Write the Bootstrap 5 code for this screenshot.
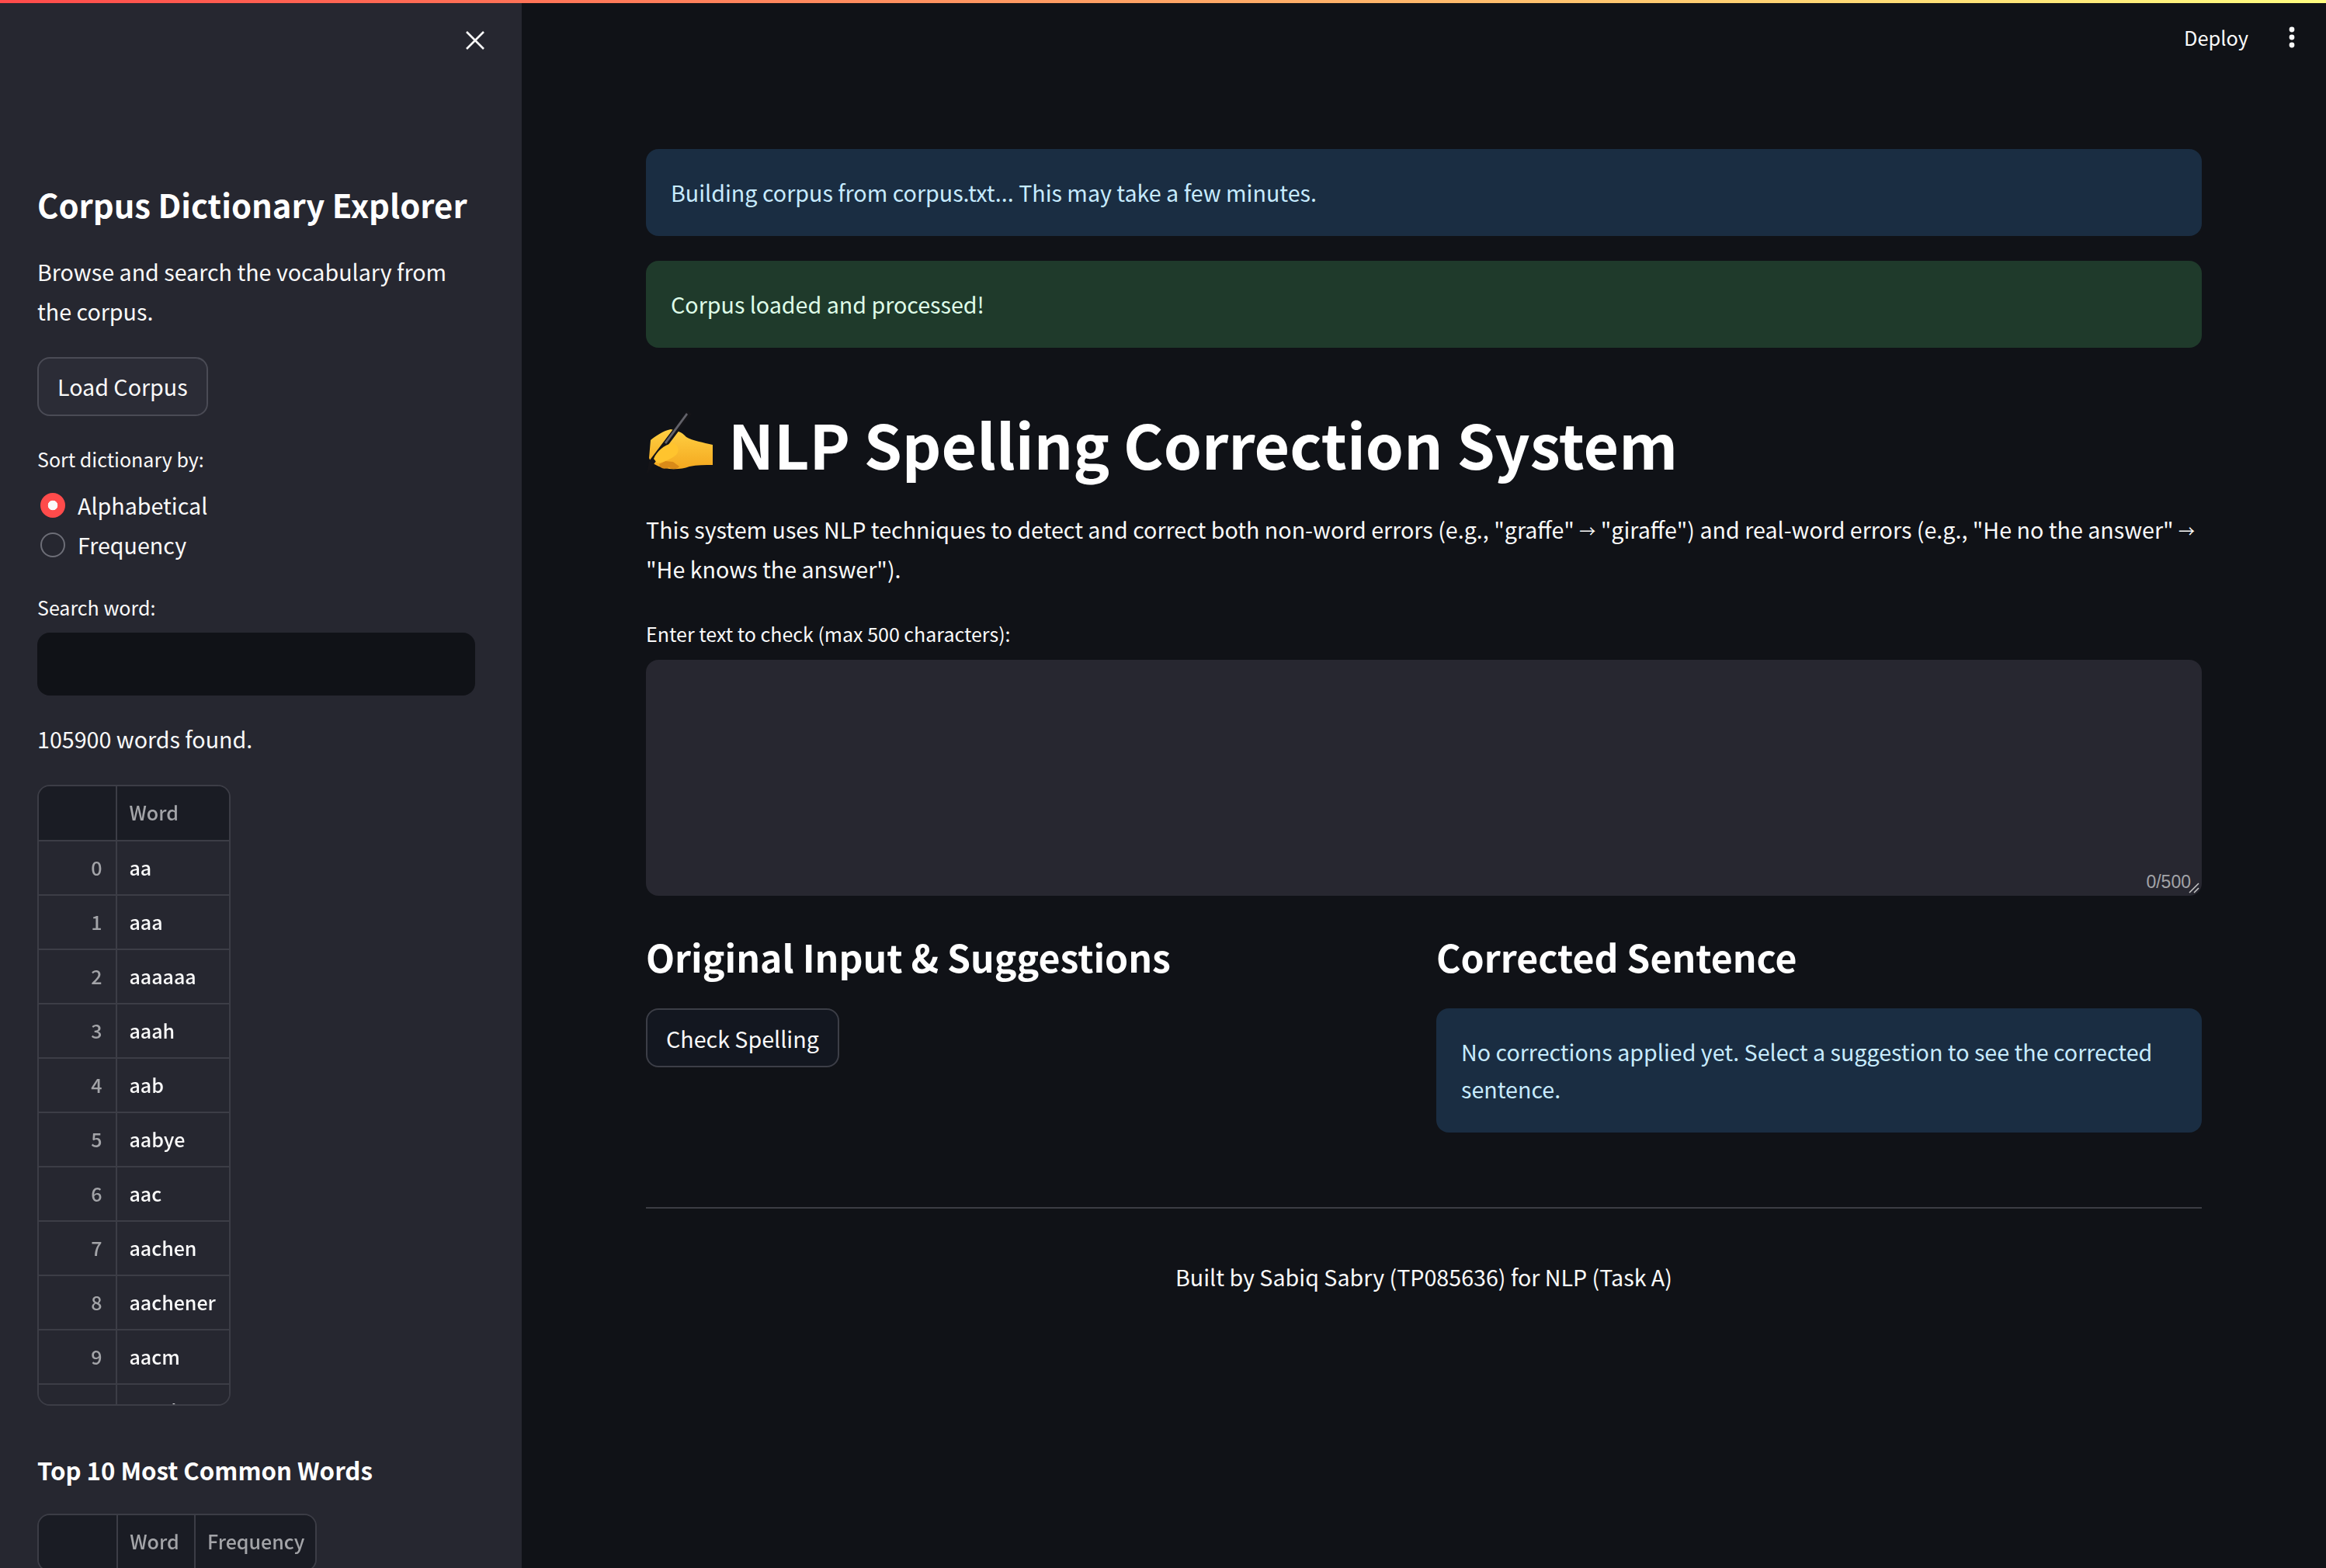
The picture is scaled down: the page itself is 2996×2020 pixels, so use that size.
<!DOCTYPE html>
<html lang="en" data-bs-theme="dark">
<head>
<meta charset="utf-8">
<title>NLP Spelling Correction System</title>
<link href="https://cdn.jsdelivr.net/npm/bootstrap@5.3.0/dist/css/bootstrap.min.css" rel="stylesheet">
<style>
html,body{height:100%;}
body{background:#101217;color:#fafafa;font-family:"Noto Sans CJK SC","Noto Sans CJK JP","Noto Sans",sans-serif;font-size:28.65px;line-height:51.2px;overflow:hidden;}
.topline{height:4px;background:linear-gradient(90deg,#ff4b4b,#fffd80);flex:none;}
.appshell{height:2016px;overflow:hidden;}
.sidepane{width:672px;flex:none;background:#262730;padding:0 60px 0 48px;height:2016px;overflow:hidden;}
.closer{height:96px;padding-top:36px;margin-right:-12px;}
.closer svg{display:block;}
.sidetitle{font-size:41.8px;font-weight:700;line-height:57.6px;margin:135px 0 0;white-space:nowrap;}
.sidetext{margin:31px 0 0;}
.stbtn{--bs-btn-color:#fafafa;--bs-btn-bg:#2b2c36;--bs-btn-border-color:#4a4b55;--bs-btn-hover-color:#fafafa;--bs-btn-hover-bg:#2b2c36;--bs-btn-hover-border-color:#4a4b55;--bs-btn-border-width:2px;--bs-btn-border-radius:16px;--bs-btn-font-size:28.65px;--bs-btn-line-height:51.2px;--bs-btn-padding-x:24px;--bs-btn-padding-y:10.4px;height:76px;}
.btn-load{margin-top:34px;display:block;}
.fieldlabel{font-size:25px;line-height:39px;margin:0;}
.sortlabel{margin-top:36px;}
.optrow{height:51px;gap:16px;}
.optrow .form-check-input{width:32px;height:32px;margin:0 0 0 4px;background-color:#262730;border:2px solid #6d6e77;float:none;flex:none;--bs-form-check-bg:#262730;}
.optrow .form-check-input:checked{background-color:#ff4b4b;border-color:#ff4b4b;background-image:radial-gradient(circle,#fafafa 0,#fafafa 6px,transparent 6.6px);}
.optgroup{margin-top:14px;}
.searchlabel{margin-top:36px;}
.searchbox{background:#101217;border:0;border-radius:16px;height:81px;margin-top:13px;}
.foundtext{margin:30px 0 0;}
.gridwrap{border:2px solid #3c3d46;border-radius:16px;overflow:hidden;filter:blur(.4px);}
.gridwrap .table{--bs-table-bg:#262730;--bs-table-color:#fafafa;--bs-table-border-color:#3c3d46;margin:0;font-size:25px;line-height:38px;border-collapse:collapse;width:auto;table-layout:fixed;}
.gridwrap th,.gridwrap td{height:70px;padding:0 0 3px 15px;vertical-align:middle;border:solid #3c3d46;border-width:0 2px 2px 0;white-space:nowrap;font-weight:500;}
.gridwrap tr>*:last-child{border-right:0;}
.gridwrap thead th{background:#1a1c24;color:#a3a4a8;}
.gridwrap tbody th{color:#a3a4a8;text-align:right;padding:0 18px 3px 0;}
.wcol0{width:102px;}
.wcol1{width:145px;}
.wcol2{width:100px;}
.wcol3{width:155px;}
.grid-one{width:249px;height:800px;margin-top:34px;}
.sidesub{font-size:31.2px;font-weight:700;line-height:45px;margin:0;}
.sidesub-wrap{margin-top:60px;}
.grid-two{width:360px;margin-top:34px;}
.mainpane{min-width:0;}
.toolbar{height:96px;padding-right:40px;gap:52px;}
.deploytxt{font-size:25.4px;line-height:40px;margin-bottom:8px;}
.dots{width:8px;margin-bottom:8px;}
.mainbody{padding:92px 160px 0;}
.stalert{border:0;border-radius:16px;margin:0;padding:32px;font-size:28.65px;line-height:48px;}
.st-info{background:#1a2d42;color:#c7ebff;}
.st-ok{background:#1f3a2b;color:#dffde9;margin-top:32px;}
.pagetitle{font-size:78.7px;font-weight:700;line-height:106px;margin:70px 0 0;display:flex;align-items:center;gap:18px;}
.pagetitle svg{flex:none;margin-left:-12px;margin-bottom:2px;}
.introtext{margin:32px 0 0;}
.arrowglyph{font-size:21px;line-height:1;vertical-align:2px;}
.textlabel{margin-top:38px;line-height:40px;}
.areabox{position:relative;background:#272730;border-radius:16px;height:304px;margin-top:14px;}
.areacount{position:absolute;right:14px;bottom:2px;font-size:23px;line-height:32px;color:#a3a4a8;font-family:"Liberation Sans","Noto Sans",sans-serif;}
.areagrip{position:absolute;right:3px;bottom:3px;}
.cols{--bs-gutter-x:32px;margin-top:44px;}
.secttitle{font-size:48.2px;font-weight:700;line-height:68px;margin:0;white-space:nowrap;}
.btn-check-s{margin-top:33px;--bs-btn-bg:#131720;--bs-btn-hover-bg:#131720;--bs-btn-border-color:#3c3e47;--bs-btn-hover-border-color:#3c3e47;}
.st-wide{margin-top:33px;padding:32px;}
.pagehr{border:0;border-top:2px solid #3c3d44;opacity:1;margin:96px 0 0;}
.footnote{text-align:center;margin:62px 0 0;}
</style>
</head>
<body>
<div class="topline"></div>
<div class="appshell d-flex">
  <aside class="sidepane">
    <div class="closer d-flex justify-content-end">
      <svg width="24" height="24" viewBox="0 0 24 24" fill="none" stroke="#fafafa" stroke-width="2.6" aria-label="Close"><path d="M1 1 23 23M23 1 1 23"/></svg>
    </div>
    <h2 class="sidetitle">Corpus Dictionary Explorer</h2>
    <p class="sidetext">Browse and search the vocabulary from the corpus.</p>
    <button type="button" class="btn stbtn btn-load">Load Corpus</button>
    <p class="fieldlabel sortlabel">Sort dictionary by:</p>
    <div class="optgroup">
      <div class="optrow d-flex align-items-center">
        <input class="form-check-input" type="radio" name="sortopt" id="optA" checked>
        <label for="optA">Alphabetical</label>
      </div>
      <div class="optrow d-flex align-items-center">
        <input class="form-check-input" type="radio" name="sortopt" id="optF">
        <label for="optF">Frequency</label>
      </div>
    </div>
    <p class="fieldlabel searchlabel">Search word:</p>
    <div class="searchbox"></div>
    <p class="foundtext">105900 words found.</p>
    <div class="gridwrap grid-one">
      <table class="table">
        <colgroup><col class="wcol0"><col class="wcol1"></colgroup>
        <thead><tr><th></th><th>Word</th></tr></thead>
        <tbody>
          <tr><th>0</th><td>aa</td></tr>
          <tr><th>1</th><td>aaa</td></tr>
          <tr><th>2</th><td>aaaaaa</td></tr>
          <tr><th>3</th><td>aaah</td></tr>
          <tr><th>4</th><td>aab</td></tr>
          <tr><th>5</th><td>aabye</td></tr>
          <tr><th>6</th><td>aac</td></tr>
          <tr><th>7</th><td>aachen</td></tr>
          <tr><th>8</th><td>aachener</td></tr>
          <tr><th>9</th><td>aacm</td></tr>
          <tr><th>10</th><td>aacsi</td></tr>
        </tbody>
      </table>
    </div>
    <div class="sidesub-wrap"><h3 class="sidesub">Top 10 Most Common Words</h3></div>
    <div class="gridwrap grid-two">
      <table class="table">
        <colgroup><col class="wcol0"><col class="wcol2"><col class="wcol3"></colgroup>
        <thead><tr><th></th><th>Word</th><th>Frequency</th></tr></thead>
      </table>
    </div>
  </aside>
  <main class="mainpane flex-grow-1">
    <header class="toolbar d-flex justify-content-end align-items-center">
      <span class="deploytxt">Deploy</span>
      <svg class="dots" width="8" height="30" viewBox="0 0 8 30" fill="#fafafa" aria-label="Menu"><circle cx="4" cy="5" r="3.4"/><circle cx="4" cy="15" r="3.4"/><circle cx="4" cy="25" r="3.4"/></svg>
    </header>
    <div class="mainbody">
      <div class="alert stalert st-info">Building corpus from corpus.txt... This may take a few minutes.</div>
      <div class="alert stalert st-ok">Corpus loaded and processed!</div>
      <h1 class="pagetitle">
        <svg width="100" height="100" viewBox="0 0 100 100" aria-label="Writing hand">
          <defs><linearGradient id="handfill" x1="0" y1="0" x2="0" y2="1"><stop offset="0" stop-color="#ffd043"/><stop offset="1" stop-color="#f4a81f"/></linearGradient></defs>
          <path d="M18 47C24 42 34 35 44 33C52 35 58 36 64 43C72 48 86 50 98 53L98 79C88 79 78 79 68 81C58 85 46 85 36 83C26 81 18 76 16 70Z" fill="url(#handfill)"/>
          <path d="M29 78C30 84 36 85 42 82C44 85 52 85 55 81L47 75L37 74Z" fill="#d98a18"/>
          <path d="M65 9 71 13 22 78 13 91 16 74Z" fill="#141418"/>
          <path d="M64 12 66 14 38 52 36 50Z" fill="#62626a"/>
          <path d="M22 71C26 61 36 53 46 51C54 52 56 60 51 66C43 72 33 77 26 76Z" fill="#ffc42e"/>
        </svg>
        <span>NLP Spelling Correction System</span>
      </h1>
      <p class="introtext">This system uses NLP techniques to detect and correct both non-word errors (e.g., "graffe" <span class="arrowglyph">→</span> "giraffe") and real-word errors (e.g., "He no the answer" <span class="arrowglyph">→</span> "He knows the answer").</p>
      <p class="fieldlabel textlabel">Enter text to check (max 500 characters):</p>
      <div class="areabox">
        <span class="areacount">0/500</span>
        <svg class="areagrip" width="14" height="14" viewBox="0 0 14 14" stroke="#c8c8c8" stroke-width="1.5" fill="none" aria-hidden="true"><path d="M1 13 13 1M7 13 13 7"/></svg>
      </div>
      <div class="row cols">
        <div class="col-6">
          <h3 class="secttitle">Original Input &amp; Suggestions</h3>
          <button type="button" class="btn stbtn btn-check-s">Check Spelling</button>
        </div>
        <div class="col-6">
          <h3 class="secttitle">Corrected Sentence</h3>
          <div class="alert stalert st-info st-wide">No corrections applied yet. Select a suggestion to see the corrected sentence.</div>
        </div>
      </div>
      <hr class="pagehr">
      <p class="footnote">Built by Sabiq Sabry (TP085636) for NLP (Task A)</p>
    </div>
  </main>
</div>
<script src="https://cdn.jsdelivr.net/npm/bootstrap@5.3.0/dist/js/bootstrap.bundle.min.js"></script>
</body>
</html>
